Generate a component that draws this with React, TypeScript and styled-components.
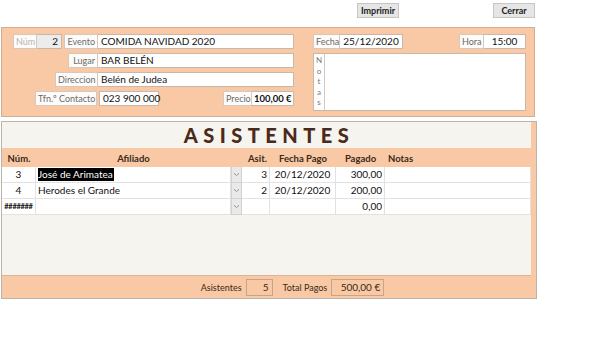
import styled, { createGlobalStyle } from 'styled-components'

const peach = '#f8c9a4'
const beige = '#f6f4ee'

const Global = createGlobalStyle`
  body {
    margin: 0;
    background: #fff;
    font-family: Lato, "Open Sans", sans-serif;
    color: #222;
  }
`

const Page = styled.div`
  width: 600px;
  height: 346px;
  overflow: hidden;
`

const TopBar = styled.div`
  display: flex;
  justify-content: flex-end;
  gap: 94px;
  width: 535px;
  height: 27px;
  padding-top: 3px;
  box-sizing: border-box;
`

const Button = styled.button`
  width: 42px;
  height: 15px;
  padding: 0;
  background: #e6e6e6;
  border: 1px solid #c6c6c6;
  font-family: Lato, sans-serif;
  font-weight: 700;
  font-size: 9px;
  color: #222;
`

const HeaderPanel = styled.section`
  display: flex;
  gap: 19px;
  width: 534px;
  height: 90px;
  margin-left: 1px;
  box-sizing: border-box;
  padding: 6px 0 0 11px;
  background: ${peach};
  border: 1px solid #d4ae90;
`

const LeftCol = styled.div`
  width: 281px;
  display: flex;
  flex-direction: column;
  gap: 4px;
`

const RightCol = styled.div`
  width: 213px;
  display: flex;
  flex-direction: column;
  gap: 4px;
`

const Row = styled.div<{ $start?: boolean }>`
  display: flex;
  justify-content: ${p => (p.$start ? 'flex-start' : 'flex-end')};
  align-items: flex-start;
  height: 15px;
`

const Spacer = styled.div`
  flex: 1;
`

const Label = styled.div<{ $w: number; $muted?: boolean; $gap?: number; $left?: boolean }>`
  width: ${p => p.$w}px;
  height: 15px;
  box-sizing: border-box;
  margin-left: ${p => p.$gap ?? 0}px;
  background: #fdfcfa;
  border: 1px solid #d6c8bc;
  color: ${p => (p.$muted ? '#b4b4b4' : '#6a6a6a')};
  font-size: 9px;
  line-height: 13px;
  text-align: ${p => (p.$left ? 'left' : 'right')};
  padding: 0 2px;
  white-space: nowrap;
`

const Value = styled.div<{ $w: number; $align?: string; $bold?: boolean; $grey?: boolean; $gap?: number; $boxed?: boolean }>`
  width: ${p => p.$w}px;
  height: 15px;
  box-sizing: border-box;
  margin-left: ${p => p.$gap ?? 0}px;
  background: ${p => (p.$grey ? '#ececec' : '#fff')};
  border: 1px solid #c9b8aa;
  border-left: ${p => (p.$boxed ? '1px solid #c9b8aa' : 'none')};
  font-size: ${p => (p.$bold ? '9.5px' : '10px')};
  line-height: 13px;
  font-weight: ${p => (p.$bold ? 700 : 400)};
  text-align: ${p => p.$align ?? 'left'};
  padding: 0 ${p => (p.$bold ? 2 : 3)}px;
  white-space: nowrap;
  color: #111;
`

const NotesBox = styled.div`
  display: flex;
  height: 56px;
  background: #fff;
  border: 1px solid #c9b8aa;
`

const NotesLabel = styled.div`
  width: 10px;
  border-right: 1px solid #d6c8bc;
  display: flex;
  flex-direction: column;
  align-items: center;
  padding-top: 1px;
  color: #777;
  font-size: 8px;
  line-height: 10.5px;
`

const ListPanel = styled.section`
  width: 536px;
  margin: 4px 0 0 1px;
  box-sizing: border-box;
  border: 1px solid #bcb4ac;
`

const ListBody = styled.div`
  display: flex;
  flex-direction: column;
  height: 176px;
  background: ${beige};
  border-right: 5px solid ${peach};
`

const Title = styled.h1`
  margin: 0;
  height: 26px;
  padding-left: 5px;
  text-align: center;
  font-family: Lato, sans-serif;
  font-weight: 900;
  font-size: 20px;
  letter-spacing: 5.5px;
  line-height: 27px;
  color: #4b2a1c;
`

const Grid = styled.div`
  display: grid;
  grid-template-columns: 34px 195px 11px 28px 66px 49px 1fr;
`

const Head = styled.div<{ $align?: string }>`
  height: 19px;
  background: ${peach};
  font-weight: 700;
  font-size: 9.5px;
  line-height: 21px;
  text-align: ${p => p.$align ?? 'center'};
  padding: 0 3px;
  color: #3a2a20;
  white-space: nowrap;
`

const Cell = styled.div<{ $align?: string; $small?: boolean }>`
  height: 16px;
  box-sizing: border-box;
  background: #fff;
  border-right: 1px solid #e2e2e2;
  border-bottom: 1px solid #e2e2e2;
  font-size: ${p => (p.$small ? '7.5px' : '10px')};
  font-weight: ${p => (p.$small ? 700 : 400)};
  letter-spacing: ${p => (p.$small ? '-0.3px' : '0')};
  line-height: 15px;
  text-align: ${p => p.$align ?? 'left'};
  padding: 0 ${p => (p.$small ? 0 : 2)}px;
  white-space: nowrap;
  overflow: hidden;
  color: #111;
`

const Selected = styled.span`
  background: #000;
  color: #fff;
  padding: 0 1px 1px 0;
`

const DropCell = styled.div`
  height: 16px;
  box-sizing: border-box;
  background: #e9e9e9;
  border: 1px solid #d2d2d2;
  border-top: none;
  display: flex;
  align-items: center;
  justify-content: center;
`

const Footer = styled.div`
  margin-top: auto;
  height: 22px;
  background: ${peach};
  border-top: 1px solid #d8b69a;
  display: flex;
  align-items: center;
  justify-content: center;
  gap: 4px;
  padding-left: 58px;
  font-size: 9px;
  color: #3a2a20;
`

const FootBox = styled.div<{ $w: number }>`
  width: ${p => p.$w}px;
  height: 17px;
  box-sizing: border-box;
  border: 1px solid #c9a486;
  text-align: right;
  padding-right: 3px;
  line-height: 15px;
  font-size: 10px;
  margin-right: 6px;
`

const Chevron = () => (
  <svg width="7" height="5" viewBox="0 0 7 5">
    <path d="M1 1.2 L3.5 3.6 L6 1.2" fill="none" stroke="#8a8a8a" strokeWidth="0.9" />
  </svg>
)

const rows = [
  { n: '3', name: 'José de Arimatea', sel: true, asit: '3', fecha: '20/12/2020', pagado: '300,00' },
  { n: '4', name: 'Herodes el Grande', sel: false, asit: '2', fecha: '20/12/2020', pagado: '200,00' },
  { n: '#######', name: '', sel: false, asit: '', fecha: '', pagado: '0,00' },
]

export default function App() {
  return (
    <Page>
      <Global />
      <TopBar>
        <Button>Imprimir</Button>
        <Button>Cerrar</Button>
      </TopBar>

      <HeaderPanel>
        <LeftCol>
          <Row $start>
            <Label $w={24} $muted $left>Núm</Label>
            <Value $w={25} $grey $align="right">2</Value>
            <Label $w={34} $gap={2}>Evento</Label>
            <Value $w={196}>COMIDA NAVIDAD 2020</Value>
          </Row>
          <Row>
            <Label $w={30}>Lugar</Label>
            <Value $w={196}>BAR BELÉN</Value>
          </Row>
          <Row>
            <Label $w={43}>Direccion</Label>
            <Value $w={196}>Belén de Judea</Value>
          </Row>
          <Row $start>
            <Label $w={62} $gap={22}>Tfn.º Contacto</Label>
            <Value $w={60} $gap={2} $boxed>023 900 000</Value>
            <Spacer />
            <Label $w={29}>Precio</Label>
            <Value $w={42} $align="right" $bold>100,00 €</Value>
          </Row>
        </LeftCol>

        <RightCol>
          <Row $start>
            <Label $w={27} $left>Fecha</Label>
            <Value $w={63} $align="center">25/12/2020</Value>
            <Spacer />
            <Label $w={25} $left>Hora</Label>
            <Value $w={42} $align="center">15:00</Value>
          </Row>
          <NotesBox>
            <NotesLabel>
              {'Notas'.split('').map((c, i) => (
                <span key={i}>{c}</span>
              ))}
            </NotesLabel>
          </NotesBox>
        </RightCol>
      </HeaderPanel>

      <ListPanel>
        <ListBody>
          <Title>ASISTENTES</Title>
          <Grid>
            <Head>Núm.</Head>
            <Head>Afiliado</Head>
            <Head />
            <Head $align="right">Asit.</Head>
            <Head>Fecha Pago</Head>
            <Head>Pagado</Head>
            <Head $align="left">Notas</Head>
            {rows.map((r, i) => (
              <AttendeeRow key={i} r={r} />
            ))}
          </Grid>
          <Footer>
            <span>Asistentes</span>
            <FootBox $w={27}>5</FootBox>
            <span>Total Pagos</span>
            <FootBox $w={53}>500,00 €</FootBox>
          </Footer>
        </ListBody>
      </ListPanel>
    </Page>
  )
}

function AttendeeRow({ r }: { r: (typeof rows)[number] }) {
  return (
    <>
      <Cell $align="center" $small={r.n.length > 3}>{r.n}</Cell>
      <Cell>{r.sel ? <Selected>{r.name}</Selected> : r.name}</Cell>
      <DropCell>
        <Chevron />
      </DropCell>
      <Cell $align="right">{r.asit}</Cell>
      <Cell $align="center">{r.fecha}</Cell>
      <Cell $align="right">{r.pagado}</Cell>
      <Cell />
    </>
  )
}
